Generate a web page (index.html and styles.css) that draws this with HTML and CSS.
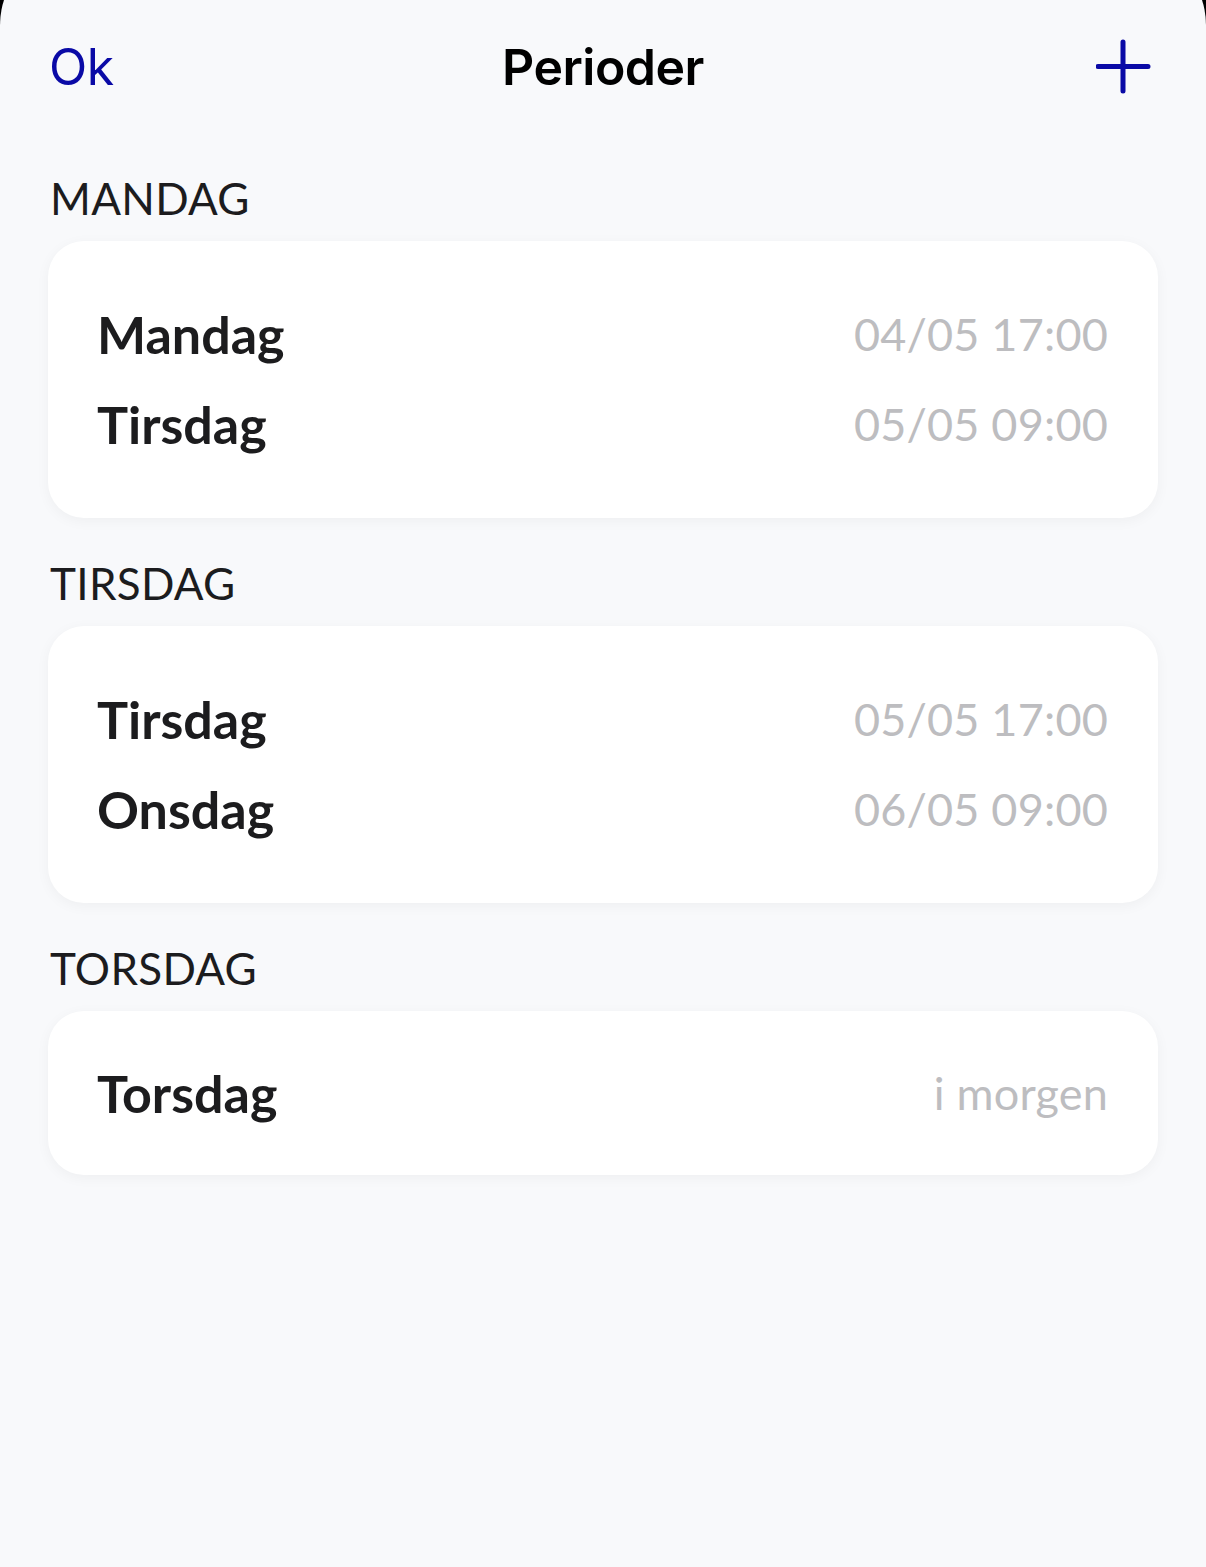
FILE: index.html
```html
<!DOCTYPE html>
<html lang="no">
<head>
<meta charset="utf-8">
<title>Perioder</title>
<link rel="stylesheet" href="styles.css">
</head>
<body>
<div class="sheet">
  <header class="nav">
    <span class="nav-btn">Ok</span>
    <h1 class="nav-title">Perioder</h1>
    <span class="nav-add" aria-label="Legg til">
      <svg width="56" height="56" viewBox="0 0 56 56"><path d="M27 3 V52 M2 27.5 H52" stroke="#0a0aa6" stroke-width="5" stroke-linecap="round" fill="none"/></svg>
    </span>
  </header>

  <section class="group">
    <h2 class="group-title">MANDAG</h2>
    <div class="card">
      <div class="row"><span class="row-label">Mandag</span><span class="row-value">04/05 17:00</span></div>
      <div class="row"><span class="row-label">Tirsdag</span><span class="row-value">05/05 09:00</span></div>
    </div>
  </section>

  <section class="group">
    <h2 class="group-title">TIRSDAG</h2>
    <div class="card">
      <div class="row"><span class="row-label">Tirsdag</span><span class="row-value">05/05 17:00</span></div>
      <div class="row"><span class="row-label">Onsdag</span><span class="row-value">06/05 09:00</span></div>
    </div>
  </section>

  <section class="group">
    <h2 class="group-title">TORSDAG</h2>
    <div class="card card-single">
      <div class="row"><span class="row-label">Torsdag</span><span class="row-value">i morgen</span></div>
    </div>
  </section>
</div>
</body>
</html>
```

FILE: styles.css
```css
html, body {
  margin: 0;
  padding: 0;
  background: #000;
  height: 100%;
  overflow: hidden;
}

.sheet {
  margin-top: -55px;
  padding-top: 55px;
  min-height: 1700px;
  background: #f8f9fb;
  border-radius: 80px 80px 0 0;
  box-sizing: border-box;
  font-family: Lato, "Noto Sans", sans-serif;
  color: #1c1c1e;
}

.nav {
  display: flex;
  align-items: center;
  justify-content: space-between;
  height: 134px;
  padding: 0 54px 0 49px;
  position: relative;
}

.nav-btn {
  font-family: Inter, "Liberation Sans", sans-serif;
  font-size: 50px;
  color: #0a0aa6;
  letter-spacing: -0.5px;
}

.nav-title {
  margin: 0;
  font-family: Inter, "Liberation Sans", sans-serif;
  font-size: 50px;
  font-weight: 600;
  color: #000;
  letter-spacing: -0.5px;
  position: absolute;
  left: 0;
  right: 0;
  text-align: center;
  pointer-events: none;
}

.nav-add {
  display: flex;
  width: 56px;
  height: 56px;
}

.group {
  padding: 0 48px;
}

.group-title {
  margin: 0;
  font-size: 44px;
  font-weight: 400;
  line-height: 56px;
  padding: 36px 0 0 2px;
  color: #1c1c1e;
  letter-spacing: 0.3px;
}

.group + .group .group-title {
  padding-top: 37px;
}

.card {
  margin-top: 15px;
  background: #fff;
  border-radius: 36px;
  padding: 48px 50px 49px 49px;
  box-shadow: 0 3px 14px rgba(0, 0, 0, 0.045);
}

.card-single {
  padding-top: 37px;
  padding-bottom: 37px;
}

.row {
  display: flex;
  justify-content: space-between;
  align-items: center;
  height: 90px;
}

.row-label {
  font-size: 52px;
  font-weight: 700;
  color: #1c1c1e;
}

.row-value {
  font-size: 45px;
  color: #bdbdc0;
  letter-spacing: 0.2px;
}
```
